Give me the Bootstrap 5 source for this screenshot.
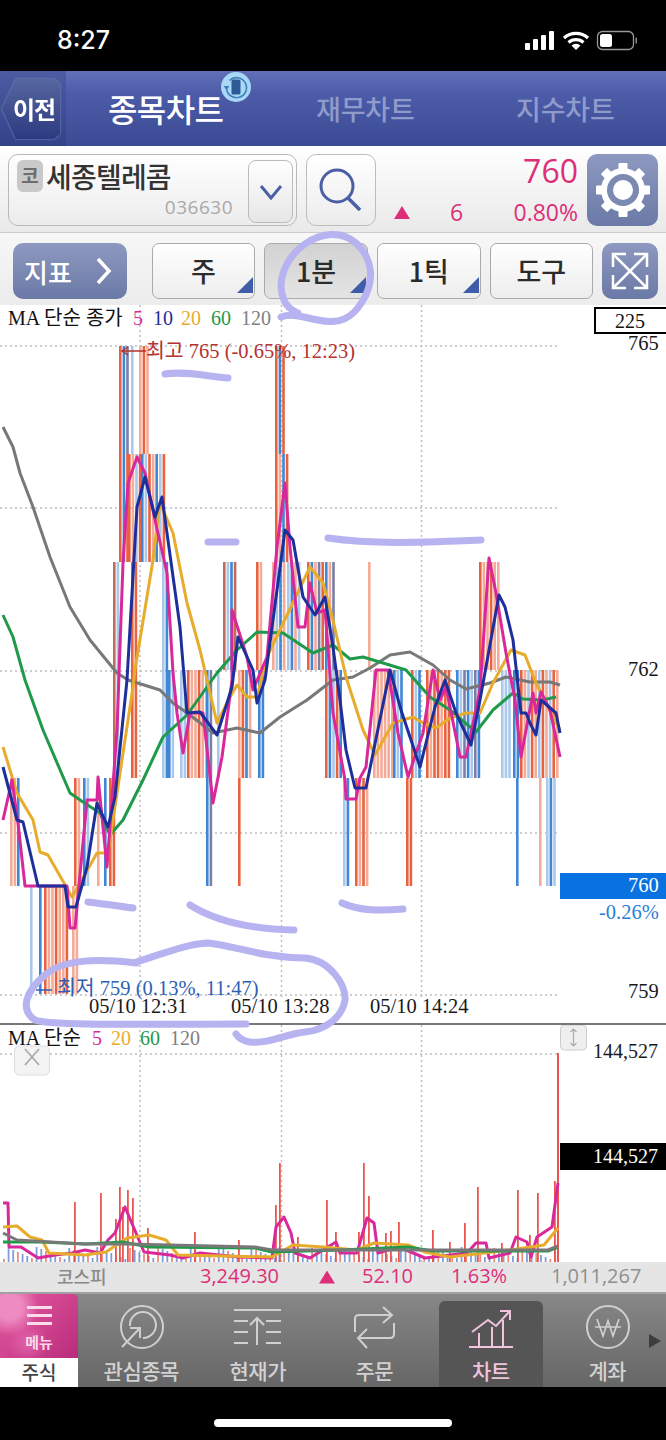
<!DOCTYPE html>
<html lang="ko">
<head>
<meta charset="utf-8">
<title>종목차트</title>
<link rel="stylesheet" href="https://cdn.jsdelivr.net/npm/bootstrap@5.3.0/dist/css/bootstrap.min.css">
<style>
html,body{margin:0;background:#000;}
body{width:666px;height:1440px;overflow:hidden;font-family:"Noto Sans CJK KR","Noto Sans",sans-serif;}
.phone{width:666px;height:1440px;}
.statusbar{height:71px;background:#000;color:#fff;padding:0 29px 0 57px;}
.clock{font:500 25px Inter,Roboto,sans-serif;padding-top:8px;}
.status-svg{display:block;margin-top:8px;}
.appbar{height:75px;background:linear-gradient(#6270b9,#4c5ca8 30%,#3a4a94);}
.back-cell{width:66px;height:75px;background:linear-gradient(#4c5ca2,#33438a);}
.back-wrap{margin-left:2px;margin-top:1px;filter:drop-shadow(0 0 1px #8390c4);}
.back-shape{width:58px;height:60px;background:linear-gradient(#56669f,#2c3a80);clip-path:polygon(24% 0,90% 0,100% 8%,100% 92%,90% 100%,24% 100%,0 50%);color:#fff;font-size:24px;font-weight:700;letter-spacing:-1px;padding-left:11px;line-height:1;}
.tab-main{color:#fff;font-size:32px;font-weight:500;margin-left:42px;letter-spacing:-.6px;line-height:1;width:116px;white-space:nowrap;position:relative;top:-1px;}
.tab-sub{color:#909bcc;font-size:27px;font-weight:500;line-height:1;white-space:nowrap;letter-spacing:-.2px;}
.tab-a{margin-left:92px;width:100px;}
.tab-b{margin-left:100px;width:100px;}
.rotate-badge{left:221px;top:1px;}
.row-stock{height:87px;background:linear-gradient(#fff,#e9e9e9);border-bottom:1px solid #ccc;padding:8px 8px 0;}
.stock-box{width:289px;height:72px;border:1px solid #b9b9b9;border-radius:10px;background:linear-gradient(#fff,#ececec);padding:5px 3px 0 8px;}
.market-tag{width:26px;height:32px;background:#c9c9c9;border-radius:6px;color:#6d6d6d;font-size:19px;font-weight:700;line-height:30px;text-align:center;}
.stock-name{font-size:28px;font-weight:500;color:#333;line-height:32px;margin-left:3px;letter-spacing:-.8px;white-space:nowrap;}
.stock-code{font:19px "Open Sans",sans-serif;color:#a9a9a9;line-height:1;text-align:right;padding-right:15px;margin-top:6px;letter-spacing:.5px;}
.chev-box{width:45px;height:63px;border:1px solid #bbb;border-radius:8px;background:linear-gradient(#fff,#e6e6e6);}
.search-box{width:70px;height:72px;border:1px solid #bdbdbd;border-radius:10px;background:linear-gradient(#fff,#ececec);margin-left:9px;}
.quote{width:202px;height:72px;color:#dd2f78;font-family:"Open Sans",sans-serif;line-height:1;}
.quote-now{font-size:32px;font-weight:500;text-align:right;padding-top:1px;height:47px;}
.quote-sub{font-size:23px;font-weight:500;padding-left:18px;}
.quote-six{margin-left:40px;}
.tri-up{width:16px;height:13px;background:#dd2f78;clip-path:polygon(50% 0,100% 100%,0 100%);}
.steel{background:linear-gradient(#8e99c0,#6a79a6);border-radius:10px;}
.gear-box{width:71px;height:72px;margin-left:9px;}
.row-tools{height:72px;background:linear-gradient(#f7f7f7,#ececec);padding:10px 8px 0 13px;}
.ind-btn{width:114px;height:56px;color:#fff;font-size:26px;font-weight:500;padding-left:11px;}
.tool-btn{width:104px;height:56px;border:1px solid #aaa;border-radius:7px;background:linear-gradient(#fff,#ededed);font-size:27px;font-weight:500;color:#2b2b2b;margin-right:9px;overflow:hidden;}
.tool-btn.is-on{background:linear-gradient(#d2d2d2,#e4e4e4);}
.tool-btn .corner{right:1px;bottom:5px;border-style:solid;border-width:0 0 16px 16px;border-color:transparent transparent #3f5ca8 transparent;width:0;height:0;}
.first-tool{margin-left:25px;}
.expand-box{width:56px;height:56px;}
.chart-svg{display:block;background:#fff;}
.chart-svg text{font-family:"Liberation Serif","Noto Sans CJK KR",serif;}
.index-strip{height:32px;background:#e5e5e5;border-bottom:2px solid #a0a0a0;font:500 20px "Open Sans","Noto Sans CJK KR",sans-serif;color:#dd2f78;line-height:1;}
.index-strip span{position:relative;top:-1px;}
.idx-name{margin-left:57px;width:143px;color:#8a8a8a;font-family:"Noto Sans CJK KR";font-size:18px;}
.idx-val{width:119px;}
.idx-tri{width:16px;height:13px;background:#dd2f78;clip-path:polygon(50% 0,100% 100%,0 100%);margin-right:27px;}
.idx-chg{width:89px;}
.idx-pct{width:100px;}
.idx-vol{color:#8f8f8f;}
.dock{height:93px;background:linear-gradient(#878787,#666);}
.dock-menu{width:78px;margin-right:5px;}
.dock-menu-top{height:64px;border-radius:0 5px 0 0;background:radial-gradient(circle at 12% 20%,#ee8cc2 0,#ee8cc2 14%,transparent 34%),radial-gradient(circle at 35% 75%,#e063a8 0,transparent 30%),linear-gradient(135deg,#e2559f,#d2458f 45%,#b92c7c);color:#f8d8ea;font-size:15px;font-weight:700;line-height:1;padding-top:12px;}
.burger{width:25px;height:3px;background:#f8dcec;margin-bottom:5px;}
.dock-menu-label{height:29px;background:#fff;color:#444;font-size:19px;font-weight:500;line-height:27px;text-align:center;}
.dock-item{width:116.5px;color:#d2d2d2;font-size:21px;font-weight:500;line-height:1;padding-top:8px;white-space:nowrap;letter-spacing:-.5px;}
.dock-item svg{display:block;height:52px;margin-bottom:6px;}
.dock-item.is-active{color:#f1c4de;}
.active-bg{left:6.500px;right:6px;top:7px;bottom:0;background:#555;border-radius:6px 6px 0 0;}
.dock-item>*:not(.active-bg){position:relative;}
.dock-arrow{width:0;height:0;border-style:solid;border-width:7px 0 7px 12px;border-color:transparent transparent transparent #3d3d3d;margin:40px 0 0 -17px;}
.homezone{height:53px;background:#000;padding-top:32px;}
.home-pill{width:238px;height:8px;background:#fff;border-radius:4px;}
.scribble{left:0;top:0;pointer-events:none;}
</style>
</head>
<body>
<div class="phone position-relative">

  <div class="statusbar d-flex justify-content-between align-items-center">
    <div class="clock">8:27</div>
    <svg class="status-svg" width="112" height="22" viewBox="525 28 112 22">
      <g fill="#fff"><rect x="525" y="42" width="5" height="7" rx="1"/><rect x="533" y="38" width="5" height="11" rx="1"/><rect x="541" y="34" width="5" height="15" rx="1"/><rect x="549" y="30" width="5" height="19" rx="1"/></g>
      <g fill="none" stroke="#fff" stroke-width="3.200"><path d="M564 37a18 18 0 0 1 24 0"/><path d="M568.500 41.500a11.500 11.500 0 0 1 15 0"/></g><path d="M576 49l-4.500-4.500a6.500 6.500 0 0 1 9 0z" fill="#fff"/>
      <rect x="597.500" y="30.500" width="36" height="18" rx="5" fill="none" stroke="#999" stroke-width="1.300"/><rect x="600" y="33" width="12" height="13" rx="2.500" fill="#fff"/><path d="M635.500 36.500a3 3 0 0 1 0 6z" fill="#888"/>
    </svg>
  </div>

  <div class="appbar d-flex align-items-center position-relative">
    <div class="back-cell d-flex align-items-center"><div class="back-wrap"><div class="back-shape d-flex align-items-center">이전</div></div></div>
    <div class="tab-main">종목차트</div>
    <svg class="rotate-badge position-absolute" width="30" height="30" viewBox="0 0 30 30"><circle cx="15" cy="15" r="15" fill="#a9d8f6"/><path d="M5.500 16a10 10 0 1 0 3-7.500" fill="none" stroke="#3f80b8" stroke-width="1.600"/><path d="M2.500 14l3 4 3-4z" fill="#3f80b8"/><rect x="10.500" y="7.500" width="9" height="15" rx="1.500" fill="#2f5a98"/></svg>
    <div class="tab-sub tab-a">재무차트</div>
    <div class="tab-sub tab-b">지수차트</div>
  </div>

  <div class="row-stock d-flex">
    <div class="stock-box d-flex justify-content-between">
      <div class="flex-grow-1">
        <div class="d-flex"><div class="market-tag">코</div><div class="stock-name">세종텔레콤</div></div>
        <div class="stock-code">036630</div>
      </div>
      <div class="chev-box d-flex align-items-center justify-content-center">
        <svg width="24" height="16" viewBox="0 0 24 16"><path d="M2 2l10 12L22 2" fill="none" stroke="#4a5fa5" stroke-width="3"/></svg>
      </div>
    </div>
    <div class="search-box d-flex align-items-center justify-content-center">
      <svg width="46" height="46" viewBox="0 0 46 46"><circle cx="19" cy="19" r="16" fill="none" stroke="#4a5fa5" stroke-width="3"/><path d="M30 31l12 12" stroke="#4a5fa5" stroke-width="3.500"/></svg>
    </div>
    <div class="quote">
      <div class="quote-now">760</div>
      <div class="quote-sub d-flex align-items-center"><div class="tri-up"></div><div class="quote-six">6</div><div class="ms-auto">0.80%</div></div>
    </div>
    <div class="gear-box steel d-flex align-items-center justify-content-center">
      <svg width="56" height="56" viewBox="0 0 56 56"><g fill="#fff"><circle cx="28" cy="28" r="22"/><rect x="23.500" y="1" width="9" height="54" rx="1"/><rect x="23.500" y="1" width="9" height="54" rx="1" transform="rotate(45 28 28)"/><rect x="23.500" y="1" width="9" height="54" rx="1" transform="rotate(90 28 28)"/><rect x="23.500" y="1" width="9" height="54" rx="1" transform="rotate(135 28 28)"/></g><circle cx="28" cy="28" r="16" fill="#7c89b1"/><circle cx="28" cy="28" r="10" fill="#fff"/></svg>
    </div>
  </div>

  <div class="row-tools d-flex">
    <div class="ind-btn steel d-flex align-items-center">지표
      <svg class="ms-4" width="16" height="28" viewBox="0 0 16 28"><path d="M2 2l11 12L2 26" fill="none" stroke="#fff" stroke-width="3.500"/></svg>
    </div>
    <div class="tool-btn first-tool position-relative d-flex align-items-center justify-content-center">주<span class="corner position-absolute"></span></div>
    <div class="tool-btn is-on position-relative d-flex align-items-center justify-content-center">1분<span class="corner position-absolute"></span></div>
    <div class="tool-btn position-relative d-flex align-items-center justify-content-center">1틱<span class="corner position-absolute"></span></div>
    <div class="tool-btn position-relative d-flex align-items-center justify-content-center">도구</div>
    <div class="expand-box steel d-flex align-items-center justify-content-center">
      <svg width="40" height="40" viewBox="0 0 40 40"><g fill="none" stroke="#fff" stroke-width="2.500"><path d="M3 3l34 34M37 3L3 37"/><path d="M3 16V3h13M24 3h13v13M37 24v13H24M16 37H3V24"/></g></svg>
    </div>
  </div>

  <svg id="priceChart" class="chart-svg" width="666" height="720" viewBox="0 305 666 720">
    <g stroke="#bdbdbd" stroke-width="1.500" stroke-dasharray="2 3" fill="none">
      <path d="M0 346H560M0 508H560M0 671H560M0 833H560M0 995H560M140 305V1000M281.500 305V1000M421.500 305V1000"/>
    </g>
    <g id="candles"></g>
    <g fill="none" stroke-width="3" stroke-linejoin="round">
      <polyline stroke="#787878" points="3,427 13,447 20,473 33,507 50,557 70,607 90,640 117,673 128,680 160,690 173,703 190,715 213,733 237,728 260,733 280,717 307,700 333,680 353,677 370,668 390,655 410,652 433,665 450,680 466,689 490,683 506,677 530,682 550,682 560,685"/>
      <polyline stroke="#1f9a4a" points="3,615 13,637 25,680 43,730 70,793 83,802 100,813 110,835 123,820 143,780 163,737 187,715 217,673 237,650 257,632 283,633 313,653 333,645 350,659 363,657 383,663 406,670 430,697 450,710 476,732 493,710 513,693 523,699 543,700 556,697"/>
      <polyline stroke="#e8ac2c" points="3,747 17,793 33,820 40,852 48,855 72,897 97,853 108,853 133,687 135,670 153,560 160,503 173,533 187,603 200,650 207,680 217,723 230,697 237,685 247,697 257,697 267,657 310,567 323,583 333,620 346,677 363,730 375,755 393,723 413,717 423,723 436,728 450,718 466,713 480,713 493,683 511,650 525,655 536,683 546,703 560,730"/>
      <polyline stroke="#d8289a" points="3,820 12,780 18,823 25,886 67,886 70,928 75,928 87,800 97,800 98,777 107,867 117,730 123,563 128,483 137,457 145,473 155,520 167,573 173,673 177,713 183,753 190,713 203,713 213,803 222,757 232,680 232,610 247,657 253,690 267,657 277,547 285,483 290,547 298,627 305,627 310,583 317,613 325,610 333,713 345,780 346,799 356,799 360,778 366,767 376,670 388,670 398,733 408,777 423,733 433,670 440,700 446,687 460,757 466,757 480,690 489,558 496,593 506,653 515,700 521,757 533,693 536,713 541,692 550,710 560,757"/>
      <polyline stroke="#1e2f9c" points="3,767 17,820 23,822 38,886 65,886 68,907 76,907 87,867 97,803 108,827 115,797 127,680 137,507 145,477 155,517 162,497 180,627 187,713 200,712 217,735 232,687 238,637 253,670 257,703 265,680 285,530 293,540 303,597 315,615 325,597 333,647 340,700 346,750 355,788 366,788 390,670 401,710 420,767 435,707 445,680 456,713 471,745 480,700 499,595 505,607 513,640 521,713 526,713 530,723 536,735 541,700 556,713 560,733"/>
    </g>
    <text x="8" y="325" font-size="20" fill="#111">MA 단순 종가</text>
    <g font-size="20"><text x="133" y="325" fill="#d8289a">5</text><text x="153" y="325" fill="#1e2f9c">10</text><text x="181" y="325" fill="#e8ac2c">20</text><text x="211" y="325" fill="#1f9a4a">60</text><text x="241" y="325" fill="#808080">120</text></g>
    <rect x="595" y="308" width="72" height="25" fill="#fff" stroke="#000" stroke-width="2"/>
    <text x="630" y="328" font-size="20" text-anchor="middle" fill="#111">225</text>
    <path d="M146 351H122m6-4l-6 4 6 4" fill="none" stroke="#b4322f" stroke-width="1.500"/>
    <text x="146" y="358" font-size="20.500" fill="#b4322f">최고 765 (-0.65%, 12:23)</text>
    <path d="M36 990H52" stroke="#2f5fb5" stroke-width="1.500"/>
    <text x="57" y="995" font-size="20.500" fill="#2f5fb5">최저 759 (0.13%, 11:47)</text>
    <g font-size="20.500" fill="#1a1a1a"><text x="628" y="350">765</text><text x="628" y="676">762</text><text x="628" y="998">759</text>
      <text x="89" y="1013">05/10 12:31</text><text x="231" y="1013">05/10 13:28</text><text x="370" y="1013">05/10 14:24</text></g>
    <rect x="560" y="873" width="106" height="26" fill="#0a72e0"/>
    <text x="628" y="892" font-size="20.500" fill="#fff">760</text>
    <text x="599" y="919" font-size="20.500" fill="#2b7fd8">-0.26%</text>
    <rect x="0" y="1023" width="666" height="2" fill="#777"/>
  </svg>

  <svg id="volChart" class="chart-svg" width="666" height="237" viewBox="0 1025 666 237">
    <path d="M0 1054H558M140 1025V1262M281.500 1025V1262M421.500 1025V1262" stroke="#bdbdbd" stroke-width="1.500" stroke-dasharray="2 3" fill="none"/>
    <g id="volBars"></g>
    <path d="M558 1053V1262" stroke="#e9564f" stroke-width="2"/>
    <g fill="none" stroke-width="3" stroke-linejoin="round">
      <polyline stroke="#d8289a" points="3,1203 8,1203 9,1247 21,1247 38,1258 55,1255 72,1253 85,1250 100,1253 108,1240 115,1233 125,1207 136,1233 144,1252 170,1255 183,1258 200,1253 238,1257 272,1258 276,1227 284,1217 291,1233 295,1253 310,1258 336,1242 340,1253 357,1253 367,1218 374,1223 378,1253 399,1247 425,1258 467,1253 476,1243 486,1243 489,1258 510,1253 516,1237 527,1242 531,1257 537,1237 552,1227 558,1183"/>
      <polyline stroke="#e8ac2c" points="3,1227 17,1226 30,1237 42,1240 49,1253 85,1255 106,1252 127,1238 149,1235 166,1240 178,1255 272,1257 293,1245 323,1247 357,1250 374,1243 408,1245 425,1252 450,1257 510,1250 544,1245 558,1228"/>
      <polyline stroke="#1f9a4a" points="3,1242 42,1242 85,1244 123,1242 149,1247 255,1248 272,1252 340,1250 408,1247 433,1251 548,1251 558,1247"/>
      <polyline stroke="#787878" points="3,1233 17,1240 85,1244 127,1244 255,1247 272,1250 361,1250 425,1250 548,1250 558,1246"/>
    </g>
    <rect x="14.500" y="1046" width="35" height="29" rx="5" fill="#f3f3f3" stroke="#ddd"/>
    <path d="M25 1049l14 16M39 1049l-14 16" stroke="#a9a9a9" stroke-width="1.800"/>
    <text x="8" y="1045" font-size="20" fill="#111">MA 단순</text>
    <g font-size="20"><text x="92" y="1045" fill="#d8289a">5</text><text x="111" y="1045" fill="#e8ac2c">20</text><text x="140" y="1045" fill="#1f9a4a">60</text><text x="170" y="1045" fill="#808080">120</text></g>
    <rect x="560.500" y="1025" width="26" height="25" rx="4" fill="#efefef" stroke="#ccc"/>
    <path d="M573.500 1029v17m-3-14l3-3 3 3m-6 11l3 3 3-3" fill="none" stroke="#aaa" stroke-width="1.200"/>
    <text x="593" y="1058" font-size="20" fill="#1a1a1a">144,527</text>
    <rect x="560" y="1143" width="106" height="27" fill="#000"/>
    <text x="593" y="1163" font-size="20" fill="#fff">144,527</text>
  </svg>

  <div class="index-strip d-flex align-items-center">
    <span class="idx-name">코스피</span><span class="idx-val">3,249.30</span><div class="idx-tri"></div><span class="idx-chg">52.10</span><span class="idx-pct">1.63%</span><span class="idx-vol">1,011,267</span>
  </div>

  <div class="dock d-flex">
    <div class="dock-menu">
      <div class="dock-menu-top d-flex flex-column align-items-center"><div class="burger"></div><div class="burger"></div><div class="burger"></div><div class="mt-1">메뉴</div></div>
      <div class="dock-menu-label">주식</div>
    </div>
    <div class="dock-item text-center">
      <svg class="mx-auto" width="50" height="52" viewBox="0 0 50 52"><g fill="none" stroke="#d0d0d0" stroke-width="2"><circle cx="26" cy="25" r="21"/><path d="M14 24A13 13 0 1 1 27 36"/><path d="M6 45L24 26M14 26H24V36"/></g></svg>
      <div>관심종목</div>
    </div>
    <div class="dock-item text-center">
      <svg class="mx-auto" width="50" height="52" viewBox="0 0 50 52"><g fill="none" stroke="#d0d0d0" stroke-width="2"><path d="M1 8H48M1 19H15M1 30H15M1 41H15M33 19H48M33 30H48M33 41H48M24 43V16M17 23L24 16L31 23"/></g></svg>
      <div>현재가</div>
    </div>
    <div class="dock-item text-center">
      <svg class="mx-auto" width="50" height="52" viewBox="0 0 50 52"><g fill="none" stroke="#d0d0d0" stroke-width="2"><path d="M6 30V17q0-4 4-4H43M34 5L43 13L34 21M45 21V32q0 4-4 4H9M18 27L9 36L18 46"/></g></svg>
      <div>주문</div>
    </div>
    <div class="dock-item is-active text-center position-relative">
      <div class="active-bg position-absolute"></div>
      <svg class="mx-auto" width="50" height="52" viewBox="0 0 50 52"><g fill="none" stroke="#f1c4de" stroke-width="2"><path d="M3 45H47M13 45V31M26 45V25M37 45V18M6 30L22 18L30 24L44 9M34 9H44V18"/></g></svg>
      <div>차트</div>
    </div>
    <div class="dock-item text-center">
      <svg class="mx-auto" width="50" height="52" viewBox="0 0 50 52"><g fill="none" stroke="#d0d0d0" stroke-width="2"><circle cx="26" cy="25" r="21"/><path d="M15 17L21 34L26 19L31 34L37 17M13 25H39" stroke-width="1.700"/></g></svg>
      <div>계좌</div>
    </div>
    <div class="dock-arrow"></div>
  </div>

  <div class="homezone d-flex justify-content-center"><div class="home-pill"></div></div>

  <svg class="scribble position-absolute" width="666" height="1440" viewBox="0 0 666 1440">
    <g fill="none" stroke="#b7b2f0" stroke-width="7" stroke-linecap="round" stroke-linejoin="round">
      <path d="M281 317C292 313 302 317 318 320C340 325 352 318 362 302C376 280 372 258 356 243C342 231 322 232 305 244C285 258 276 282 284 300C287 308 293 311 298 313"/>
      <path d="M165 374C185 371 205 376 228 378"/>
      <path d="M208 542H236"/>
      <path d="M328 538C375 545 430 542 481 540"/>
      <path d="M88 902C105 904 118 906 133 908"/>
      <path d="M190 905C215 921 250 929 294 930"/>
      <path d="M342 903C360 911 380 911 403 909"/>
      <path d="M136 962C160 955 185 944 208 943C235 946 265 958 305 958C330 960 346 985 345 1000C342 1018 325 1030 305 1032C285 1034 270 1044 250 1042C243 1041 238 1037 236 1034"/>
      <path d="M136 963C100 959 65 958 45 975C25 992 20 1010 35 1020C50 1026 150 1024 246 1024"/>
    </g>
  </svg>
</div>

<script>
(function(){
  var NS='http://www.w3.org/2000/svg';
  var C={r:'#e8623f',p:'#f4ab98',b:'#3f86d4',l:'#a9c8ea',d:'#7a7fa6',w:'#c46a58'};
  function bar(host,x,y1,y2,col,w){
    var el=document.createElementNS(NS,'rect');
    el.setAttribute('x',x);el.setAttribute('y',y1);el.setAttribute('width',w);el.setAttribute('height',y2-y1);el.setAttribute('fill',col);
    host.appendChild(el);
  }
  var L=[346,454,562,670,778,886,994];
  var groups=[
    [10,16,4,5,'p'],[17,20,4,5,'bl'],[30,33,5,6,'lb'],[39,41,5,6,'b'],[44,67,5,6,'rpp'],[67,72,5,7,'bd'],[72,76,5,6,'p'],
    [74,78,4,5,'rp'],[83,88,4,5,'bl'],[97,100,4,5,'p'],[104,107,4,5,'b'],[109,116,4,5,'r'],
    [113,118,2,4,'wl'],[131,135,2,4,'r'],[162,167,2,4,'lb'],
    [119,128,0,1,'rbd'],[131,132,0,1,'l'],[139,147,0,1,'pr'],
    [119,127,1,2,'rb'],[128,140,1,2,'rpl'],[141,165,1,2,'blrp'],
    [168,175,3,4,'bl'],[180,185,3,4,'l'],[187,205,3,4,'rpp'],[206,212,3,5,'bd'],[217,220,3,4,'lb'],[223,235,2,3,'wlb'],
    [238,252,3,4,'prb'],[238,239,4,5,'r'],[258,262,3,4,'b'],[256,262,2,3,'rp'],[272,285,2,3,'plb'],[287,300,2,3,'lbp'],[307,333,2,3,'rbpd'],
    [275,285,0,1,'rb'],[275,287,1,2,'rpb'],
    [325,343,3,4,'rbl'],[343,348,4,5,'lb'],[355,366,4,5,'rp'],[368,371,2,3,'p'],
    [373,393,3,4,'pp'],[393,401,3,4,'bl'],[406,411,4,5,'r'],[411,421,3,4,'rlb'],[426,448,3,4,'rpr'],[456,478,3,4,'bld'],
    [479,498,2,3,'rpp'],[501,510,3,4,'l'],[513,518,3,4,'b'],[516,517,4,5,'b'],[520,558,3,4,'rpl'],[539,540,4,5,'p'],[546,555,4,5,'lb']
  ];
  var host=document.getElementById('candles');
  groups.forEach(function(g){
    var i=0;
    for(var x=g[0];x<=g[1];x+=3.6){
      var c=g[4].charAt(i%g[4].length);i++;
      bar(host,x,L[g[2]],L[g[3]],C[c],2.6);
    }
  });
  var vol=document.getElementById('volBars');
  for(var i=0;i<119;i++){
    var x=3+i*4.67,h=3+((i*37)%13);
    bar(vol,x,1262-h,1262,(i%3)?'#7f9dd6':'#f08a7c',1.800);
  }
  [[74,1202],[100,1193],[115,1219],[119,1187],[122,1207],[127,1190],[132,1198],[147,1228],[194,1232],[238,1240],[275,1205],[279,1163],[297,1237],[326,1200],[335,1232],[358,1232],[363,1163],[368,1196],[385,1233],[390,1231],[398,1222],[432,1230],[449,1242],[464,1223],[477,1187],[501,1243],[517,1190],[529,1235],[537,1193],[554,1181]].forEach(function(s){
    bar(vol,s[0],s[1],1262,'#e9564f',1.800);
  });
})();
</script>
<script src="https://cdn.jsdelivr.net/npm/bootstrap@5.3.0/dist/js/bootstrap.bundle.min.js"></script>
</body>
</html>
